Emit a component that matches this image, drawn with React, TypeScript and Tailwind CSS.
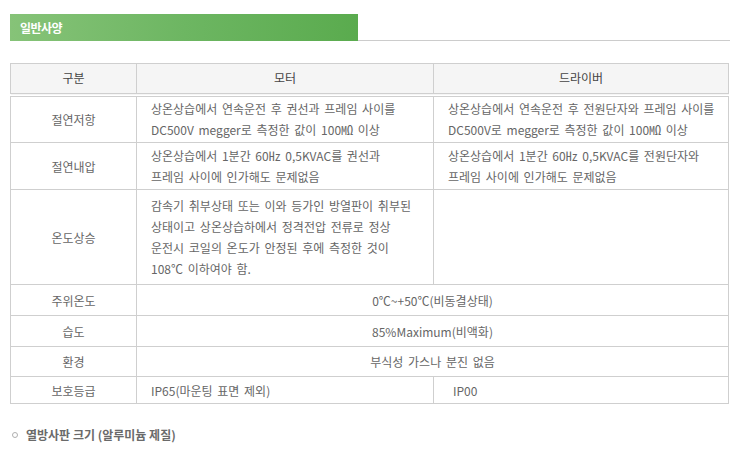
const font = { fontFamily: '"Noto Sans CJK KR", "Noto Sans", sans-serif' };

const cell = "border border-[#cfcfcf] text-[12px] leading-[21px] text-[#666] align-middle [word-spacing:2px]";
const head = "border border-b-4 border-double border-[#cfcfcf] text-[12px] font-normal text-[#444]";

export default function App() {
  return (
    <div className="min-h-screen bg-white pl-[10px] pt-[14px]" style={font}>
      <div className="flex w-[720px] items-end">
        <div className="flex h-[27px] w-[348px] items-center bg-gradient-to-r from-[#86c378] via-[#6db662] to-[#5aab4e] pl-[10px] text-[12px] font-bold tracking-[-0.5px] text-white">
          일반사양
        </div>
        <div className="h-px flex-1 bg-[#cccccc]" />
      </div>

      <table className="mt-[22px] w-[719px] table-fixed border-collapse">
        <colgroup>
          <col className="w-[126px]" />
          <col className="w-[297px]" />
          <col />
        </colgroup>
        <thead>
          <tr className="h-[31px] bg-[#f5f5f5]">
            <th className={head}>구분</th>
            <th className={head}>모터</th>
            <th className={head}>드라이버</th>
          </tr>
        </thead>
        <tbody>
          <tr className="h-[48px]">
            <td className={`${cell} text-center`}>절연저항</td>
            <td className={`${cell} pl-[14px]`}>
              상온상습에서 연속운전 후 권선과 프레임 사이를
              <br />
              DC500V megger로 측정한 값이 100㏁ 이상
            </td>
            <td className={`${cell} pl-[14px]`}>
              상온상습에서 연속운전 후 전원단자와 프레임 사이를
              <br />
              DC500V로 megger로 측정한 값이 100㏁ 이상
            </td>
          </tr>
          <tr className="h-[47px]">
            <td className={`${cell} text-center`}>절연내압</td>
            <td className={`${cell} pl-[14px]`}>
              상온상습에서 1분간 60㎐ 0,5KVAC를 권선과
              <br />
              프레임 사이에 인가해도 문제없음
            </td>
            <td className={`${cell} pl-[14px]`}>
              상온상습에서 1분간 60㎐ 0,5KVAC를 전원단자와
              <br />
              프레임 사이에 인가해도 문제없음
            </td>
          </tr>
          <tr className="h-[95px]">
            <td className={`${cell} text-center`}>온도상승</td>
            <td className={`${cell} pl-[14px]`}>
              감속기 취부상태 또는 이와 등가인 방열판이 취부된
              <br />
              상태이고 상온상습하에서 정격전압 전류로 정상
              <br />
              운전시 코일의 온도가 안정된 후에 측정한 것이
              <br />
              108℃ 이하여야 함.
            </td>
            <td className={cell}></td>
          </tr>
          <tr className="h-[31px]">
            <td className={`${cell} text-center`}>주위온도</td>
            <td colSpan={2} className={`${cell} text-center`}>
              0℃~+50℃(비동결상태)
            </td>
          </tr>
          <tr className="h-[31px]">
            <td className={`${cell} text-center`}>습도</td>
            <td colSpan={2} className={`${cell} text-center`}>
              85%Maximum(비액화)
            </td>
          </tr>
          <tr className="h-[30px]">
            <td className={`${cell} text-center`}>환경</td>
            <td colSpan={2} className={`${cell} text-center`}>
              부식성 가스나 분진 없음
            </td>
          </tr>
          <tr className="h-[27px]">
            <td className={`${cell} text-center`}>보호등급</td>
            <td className={`${cell} pl-[14px]`}>IP65(마운팅 표면 제외)</td>
            <td className={`${cell} pl-[19px]`}>IP00</td>
          </tr>
        </tbody>
      </table>

      <div className="mt-[22px] flex items-center gap-[8px] pl-[2px] text-[12px] font-semibold text-[#6a6a6a]">
        <span className="h-[6px] w-[6px] rounded-full border border-[#b0b0b0]" />
        <span>열방사판 크기 (알루미늄 제질)</span>
      </div>
    </div>
  );
}
